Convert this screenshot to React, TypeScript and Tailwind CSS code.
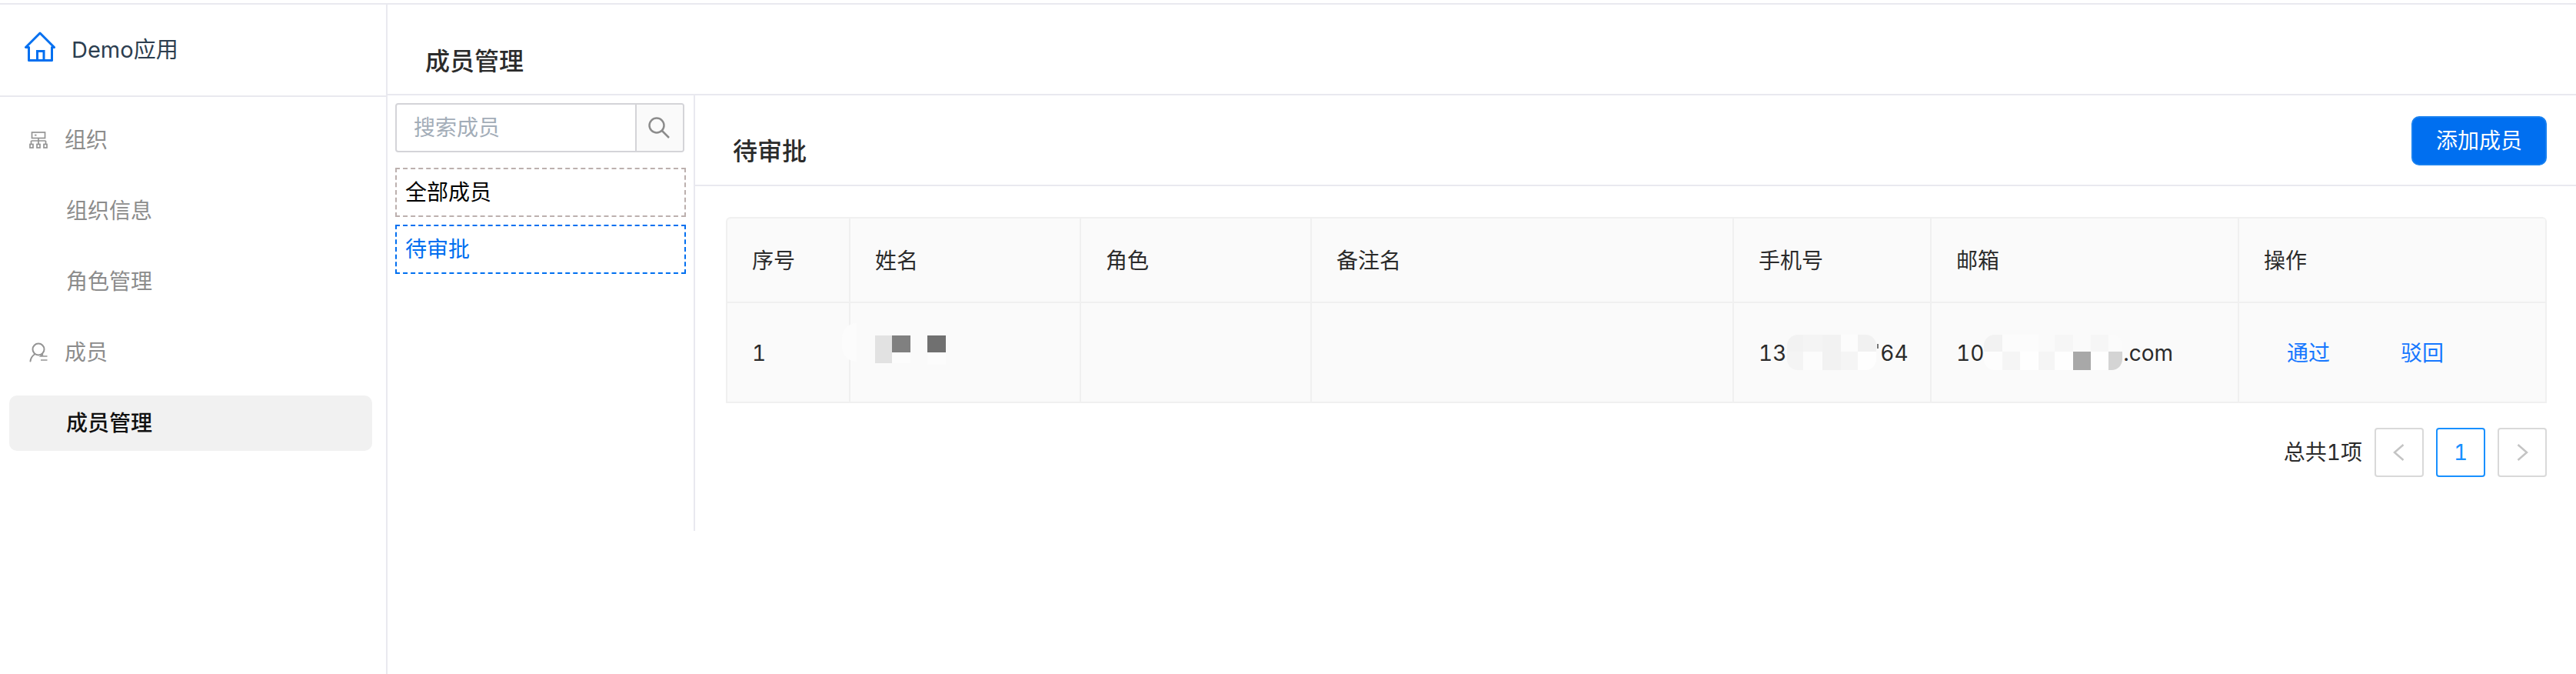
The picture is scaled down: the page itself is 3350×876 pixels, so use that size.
import React from "react";

const font = "[font-family:Inter,'Noto_Sans_CJK_SC',sans-serif]";

function HomeIcon() {
  return (
    <svg width="42" height="39" viewBox="0 0 42 39" fill="none" stroke="#006ff0" strokeWidth="3" className="mb-[10px] shrink-0">
      <path d="M21 2 2.500 20.500H6.500V37.500H36.500V20.500H39.500L21 2Z" strokeLinejoin="round" />
      <path d="M17.500 37.500V25.500H26V37.500" />
    </svg>
  );
}

function OrgIcon() {
  return (
    <svg width="24" height="22" viewBox="0 0 24 22" fill="none" stroke="#949494" strokeWidth="1.700" className="shrink-0">
      <rect x="3.500" y="1" width="17" height="7.500" />
      <path d="M7 4.700h2.500M12 8.500v3.500M2.500 12h19M2.500 12v4M12 12v4M21.500 12v4" />
      <rect x="1" y="16.500" width="4" height="4.500" />
      <rect x="10" y="16.500" width="4" height="4.500" />
      <rect x="19" y="16.500" width="4" height="4.500" />
    </svg>
  );
}

function UserIcon() {
  return (
    <svg width="24" height="26" viewBox="0 0 24 26" fill="none" stroke="#949494" strokeWidth="2" className="shrink-0">
      <circle cx="12" cy="9" r="7.500" />
      <path d="M1.500 24.500C2 20.500 4 17.500 7 15.500" strokeLinecap="round" />
      <path d="M23.500 18H15l3-2.500M15 23h8.500" strokeWidth="1.700" />
    </svg>
  );
}

function SearchIcon() {
  return (
    <svg width="28" height="28" viewBox="0 0 28 28" fill="none" stroke="#8c8c8c" strokeWidth="2.500" className="mr-[2px]">
      <circle cx="11" cy="11" r="9.500" />
      <path d="m18 18 9 9" />
    </svg>
  );
}

function Mosaic({ columns }: { columns: { w: string; top: string; bottom: string }[] }) {
  return (
    <div className="flex h-[46px] shrink-0 overflow-hidden rounded-[14px]">
      {columns.map((c, i) => (
        <div key={i} className={"flex h-full flex-col " + c.w}>
          <div className={"h-[22px] " + c.top} />
          <div className={"h-[24px] " + c.bottom} />
        </div>
      ))}
    </div>
  );
}

const phoneCols = [
  { w: "w-[21px]", top: "bg-[#f2f2f2]", bottom: "bg-[#f4f4f4]" },
  { w: "w-[25px]", top: "bg-[#f4f4f4]", bottom: "bg-[#fcfcfc]" },
  { w: "w-[24px]", top: "bg-[#f2f2f2]", bottom: "bg-[#f2f2f2]" },
  { w: "w-[22px]", top: "bg-[#fcfcfc]", bottom: "bg-[#f5f5f5]" },
  { w: "w-[24px]", top: "bg-[#f1f1f1]", bottom: "bg-[#fefefe]" },
];

const emailCols = [
  { w: "w-[24px]", top: "bg-[#f2f2f2]", bottom: "bg-[#fdfdfd]" },
  { w: "w-[23px]", top: "bg-[#fcfcfc]", bottom: "bg-[#f5f5f5]" },
  { w: "w-[24px]", top: "bg-[#fcfcfc]", bottom: "bg-[#fefefe]" },
  { w: "w-[21px]", top: "bg-[#fafafa]", bottom: "bg-[#f5f5f5]" },
  { w: "w-[24px]", top: "bg-[#f6f6f6]", bottom: "bg-[#fefefe]" },
  { w: "w-[23px]", top: "bg-[#fafafa]", bottom: "bg-[#a8a8a8]" },
  { w: "w-[23px]", top: "bg-[#f6f6f6]", bottom: "bg-[#fefefe]" },
  { w: "w-[18px]", top: "bg-[#fbfbfb]", bottom: "bg-[#d4d4d4]" },
];

const th = "border-r-2 border-b-2 border-[#f0f0f0] pt-[2px] pl-[32px] text-left font-normal";
const td = "border-r-2 border-b-2 border-[#f0f0f0] pt-[2px] pl-[32px] align-middle";

function PageButton({ children, active }: { children: React.ReactNode; active?: boolean }) {
  return (
    <div
      className={
        "flex h-[64px] w-[64px] items-center justify-center rounded-[4px] border-2 " +
        (active ? "border-[#1890ff] text-[#1890ff]" : "border-[#d9d9d9]")
      }
    >
      {children}
    </div>
  );
}

export default function App() {
  return (
    <div className={"flex h-[876px] w-[3350px] flex-col bg-white pt-[4px] tabular-nums " + font}>
      <div className="flex min-h-0 flex-1 border-t-2 border-[#e9e9ef]">
        <aside className="flex w-[504px] shrink-0 flex-col border-r-2 border-[#e9e9ef]">
          <div className="flex h-[120px] shrink-0 items-center gap-[20px] border-b-2 border-[#e9e9ef] pl-[31px] text-[29px] text-[#2c3e50]">
            <HomeIcon />
            <span>Demo应用</span>
          </div>
          <nav className="flex flex-col pt-[20px] pr-[18px] pl-[12px] text-[28px] text-[#8c8c8c]">
            <div className="flex h-[72px] items-center gap-[22px] pl-[26px]">
              <OrgIcon />
              <span>组织</span>
            </div>
            <div className="mt-[20px] flex h-[72px] items-center pl-[74px]">组织信息</div>
            <div className="mt-[20px] flex h-[72px] items-center pl-[74px]">角色管理</div>
            <div className="mt-[20px] flex h-[72px] items-center gap-[22px] pl-[26px]">
              <UserIcon />
              <span>成员</span>
            </div>
            <div className="mt-[20px] flex h-[72px] items-center rounded-[10px] bg-[#f1f1f1] pl-[74px] font-medium text-[#111111]">
              成员管理
            </div>
          </nav>
        </aside>

        <main className="flex min-w-0 flex-1 flex-col">
          <div className="flex h-[118px] shrink-0 items-end border-b-2 border-[#e9e9ef] pb-[18px] pl-[49px] text-[32px] leading-[48px] font-medium text-[#2b2b2b]">
            成员管理
          </div>
          <div className="flex">
            <div className="flex h-[566px] w-[400px] shrink-0 flex-col border-r-2 border-[#e9e9ef] pl-[10px]">
              <div className="mt-[10px] flex h-[64px] w-[376px] overflow-hidden rounded-[4px] border-2 border-[#d4d4d8]">
                <div className="flex flex-1 items-center pl-[22px] text-[28px] text-[#a3adb8]">搜索成员</div>
                <div className="flex w-[62px] items-center justify-center border-l-2 border-[#d4d4d8] bg-[#fafafa]">
                  <SearchIcon />
                </div>
              </div>
              <div className="mt-[20px] flex h-[64px] w-[378px] items-center border-2 border-dashed border-[#bcb0ae] pl-[11px] text-[28px] text-black">
                全部成员
              </div>
              <div className="mt-[10px] flex h-[64px] w-[378px] items-center border-2 border-dashed border-[#006ff0] pl-[11px] text-[28px] text-[#006ff0]">
                待审批
              </div>
            </div>
            <div className="min-w-0 flex-1">
              <div className="flex h-[118px] items-center justify-between border-b-2 border-[#e9e9ef] pr-[38px] pl-[49px]">
                <span className="mt-[30px] text-[32px] font-medium text-[#2b2b2b]">待审批</span>
                <button className="mt-[2px] flex h-[64px] w-[176px] items-center justify-center rounded-[10px] border-2 border-[#1780f0] bg-[#006ff0] text-[28px] text-white">
                  添加成员
                </button>
              </div>
              <div className="mt-[40px] mr-[38px] ml-[40px]">
                <table className="w-[2368px] table-fixed border-separate border-spacing-0 overflow-hidden rounded-t-[6px] border-t-2 border-l-2 border-[#f0f0f0] bg-[#fafafa] text-[28px] text-[#2b2b2b]">
                  <colgroup>
                    <col className="w-[160px]" />
                    <col className="w-[300px]" />
                    <col className="w-[300px]" />
                    <col className="w-[549px]" />
                    <col className="w-[257px]" />
                    <col className="w-[400px]" />
                    <col className="w-[400px]" />
                  </colgroup>
                  <thead>
                    <tr className="h-[110px]">
                      <th className={th}>序号</th>
                      <th className={th}>姓名</th>
                      <th className={th}>角色</th>
                      <th className={th}>备注名</th>
                      <th className={th}>手机号</th>
                      <th className={th}>邮箱</th>
                      <th className={th}>操作</th>
                    </tr>
                  </thead>
                  <tbody>
                    <tr className="h-[130px]">
                      <td className={td}>1</td>
                      <td className={td}>
                        <div className="relative h-[40px]">
                          <div className="absolute top-[-19px] left-[-43px] h-[50px] w-[19px] rounded-l-full bg-[#fcfcfc]" />
                          <div className="absolute top-[-3px] left-0 h-[36px] w-[22px] bg-[#e2e2e2]" />
                          <div className="absolute top-[-3px] left-[22px] h-[22px] w-[24px] bg-[#808080]" />
                          <div className="absolute top-[19px] left-[22px] h-[14px] w-[24px] bg-[#fcfcfc]" />
                          <div className="absolute top-[-3px] left-[68px] h-[22px] w-[24px] bg-[#707070]" />
                          <div className="absolute top-[19px] left-[68px] h-[16px] w-[24px] bg-[#fcfcfc]" />
                        </div>
                      </td>
                      <td className={td} />
                      <td className={td} />
                      <td className={td}>
                        <div className="flex items-center">
                          <span>13</span>
                          <div className="relative mt-[-2px] mr-[5px] ml-[1px]">
                            <Mosaic columns={phoneCols} />
                            <div className="absolute top-[12px] right-[-3px] h-[6px] w-[2px] bg-[#777777]" />
                          </div>
                          <span>64</span>
                        </div>
                      </td>
                      <td className={td}>
                        <div className="flex items-center">
                          <span>10</span>
                          <div className="mt-[-2px] mr-[1px]">
                            <Mosaic columns={emailCols} />
                          </div>
                          <span>.com</span>
                        </div>
                      </td>
                      <td className={td}>
                        <div className="flex gap-[92px] pl-[30px] text-[#1677ff]">
                          <span>通过</span>
                          <span>驳回</span>
                        </div>
                      </td>
                    </tr>
                  </tbody>
                </table>
                <div className="mt-[32px] flex items-center justify-end text-[28px] text-[#2b2b2b]">
                  <span className="mr-[16px]">总共1项</span>
                  <div className="flex gap-[16px]">
                    <PageButton>
                      <svg width="16" height="24" viewBox="0 0 16 24" fill="none" stroke="#c4c4c4" strokeWidth="2.500">
                        <path d="M13.500 2 2 12l11.500 10" />
                      </svg>
                    </PageButton>
                    <PageButton active>1</PageButton>
                    <PageButton>
                      <svg width="16" height="24" viewBox="0 0 16 24" fill="none" stroke="#c4c4c4" strokeWidth="2.500">
                        <path d="M2.500 2 14 12 2.500 22" />
                      </svg>
                    </PageButton>
                  </div>
                </div>
              </div>
            </div>
          </div>
        </main>
      </div>
    </div>
  );
}
